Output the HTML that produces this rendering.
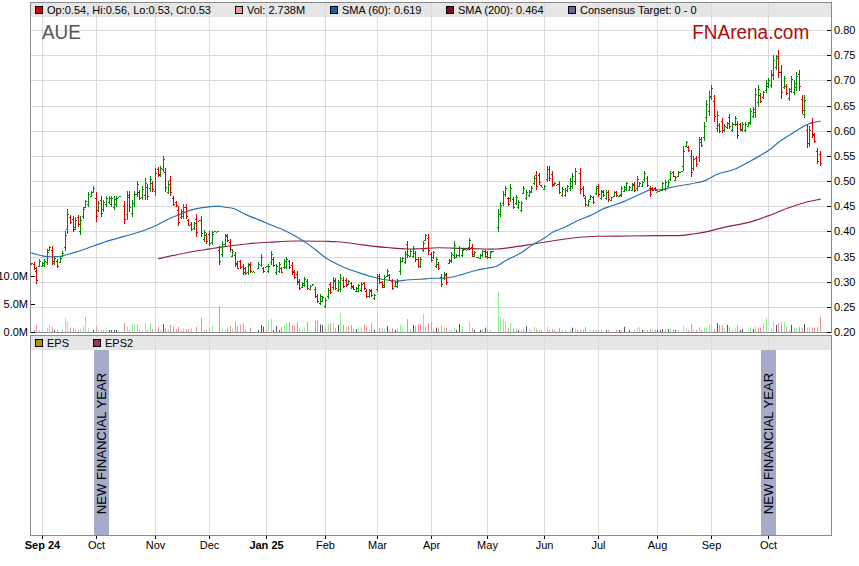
<!DOCTYPE html><html><head><meta charset="utf-8"><style>html,body{margin:0;padding:0;background:#fff;width:859px;height:566px;overflow:hidden}svg{display:block}text{font-family:"Liberation Sans",sans-serif}</style></head><body>
<svg width="859" height="566" viewBox="0 0 859 566">
<rect x="31" y="3" width="800" height="14" fill="#e6e6e6"/>
<path d="M31 30.5H831 M31 55.5H831 M31 80.5H831 M31 106.5H831 M31 131.5H831 M31 156.5H831 M31 181.5H831 M31 206.5H831 M31 231.5H831 M31 257.5H831 M31 282.5H831 M31 307.5H831 M42.5 3V332 M96.5 3V332 M155.5 3V332 M209.5 3V332 M266.5 3V332 M325.5 3V332 M377.5 3V332 M431.5 3V332 M487.5 3V332 M544.5 3V332 M598.5 3V332 M657.5 3V332 M711.5 3V332 M768.5 3V332" stroke="#dadada" stroke-width="1" fill="none" shape-rendering="crispEdges"/>
<rect x="35.5" y="6.5" width="7" height="7" fill="#dd0000" stroke="#000" stroke-width="1" shape-rendering="crispEdges"/>
<text x="47" y="14" font-size="11" fill="#000">Op:0.54, Hi:0.56, Lo:0.53, Cl:0.53</text>
<rect x="235.5" y="6.5" width="7" height="7" fill="#f49a9a" stroke="#000" stroke-width="1" shape-rendering="crispEdges"/>
<text x="247" y="14" font-size="11" fill="#000">Vol: 2.738M</text>
<rect x="330.5" y="6.5" width="7" height="7" fill="#1f5fa0" stroke="#000" stroke-width="1" shape-rendering="crispEdges"/>
<text x="342" y="14" font-size="11" fill="#000">SMA (60): 0.619</text>
<rect x="446.5" y="6.5" width="7" height="7" fill="#7a0c2a" stroke="#000" stroke-width="1" shape-rendering="crispEdges"/>
<text x="458" y="14" font-size="11" fill="#000">SMA (200): 0.464</text>
<rect x="568.5" y="6.5" width="7" height="7" fill="#6a6a9a" stroke="#000" stroke-width="1" shape-rendering="crispEdges"/>
<text x="580" y="14" font-size="11" fill="#000">Consensus Target: 0 - 0</text>
<text x="42" y="38.7" font-size="20.2" textLength="38.8" lengthAdjust="spacingAndGlyphs" fill="#555">AUE</text>
<text x="692.3" y="38.7" font-size="20" textLength="116.9" lengthAdjust="spacingAndGlyphs" fill="#b00a0a">FNArena.com</text>
<path d="M39.5 332V330.0 M47.5 332V327.7 M49.5 332V324.9 M62.5 332V329.1 M65.5 332V317.9 M67.5 332V322.1 M75.5 332V330.0 M80.5 332V329.1 M83.5 332V326.1 M85.5 332V316.1 M88.5 332V327.7 M98.5 332V330.0 M103.5 332V330.0 M106.5 332V330.0 M127.5 332V326.8 M132.5 332V324.0 M134.5 332V325.4 M137.5 332V324.0 M142.5 332V330.0 M145.5 332V323.1 M150.5 332V323.1 M155.5 332V326.1 M160.5 332V330.0 M168.5 332V329.1 M181.5 332V330.0 M183.5 332V328.4 M204.5 332V330.0 M212.5 332V326.1 M222.5 332V328.4 M225.5 332V330.0 M232.5 332V328.4 M268.5 332V320.7 M271.5 332V319.1 M284.5 332V325.4 M286.5 332V322.1 M299.5 332V328.4 M302.5 332V330.0 M304.5 332V327.7 M310.5 332V330.0 M325.5 332V326.8 M328.5 332V324.0 M333.5 332V323.1 M340.5 332V312.8 M346.5 332V326.8 M353.5 332V328.4 M358.5 332V328.4 M361.5 332V327.7 M369.5 332V330.0 M377.5 332V316.1 M384.5 332V329.1 M389.5 332V330.0 M397.5 332V328.4 M400.5 332V324.9 M402.5 332V326.8 M410.5 332V329.1 M423.5 332V313.7 M425.5 332V326.1 M433.5 332V329.1 M444.5 332V327.7 M449.5 332V330.0 M451.5 332V330.0 M454.5 332V327.7 M462.5 332V326.1 M469.5 332V322.1 M482.5 332V329.1 M490.5 332V330.0 M498.5 332V291.9 M500.5 332V317.0 M503.5 332V319.1 M505.5 332V320.7 M510.5 332V323.1 M516.5 332V328.4 M521.5 332V330.0 M523.5 332V329.1 M529.5 332V329.1 M531.5 332V330.0 M534.5 332V326.8 M547.5 332V326.8 M562.5 332V330.0 M565.5 332V330.0 M570.5 332V330.0 M575.5 332V329.1 M590.5 332V330.0 M596.5 332V330.0 M601.5 332V330.0 M621.5 332V330.0 M637.5 332V327.7 M639.5 332V326.8 M644.5 332V330.0 M652.5 332V330.0 M665.5 332V329.1 M670.5 332V327.7 M678.5 332V330.0 M683.5 332V326.1 M686.5 332V329.1 M693.5 332V329.1 M699.5 332V326.8 M704.5 332V327.7 M706.5 332V327.7 M709.5 332V324.0 M711.5 332V326.1 M724.5 332V327.7 M732.5 332V330.0 M735.5 332V328.4 M748.5 332V330.0 M750.5 332V327.7 M755.5 332V326.1 M763.5 332V323.1 M766.5 332V317.9 M771.5 332V328.4 M773.5 332V322.1 M784.5 332V322.1 M789.5 332V330.0 M794.5 332V327.7 M796.5 332V327.7 M807.5 332V327.7 M809.5 332V326.8" stroke="#8ef08e" stroke-width="1" fill="none"/>
<path d="M34.5 332V330.0 M36.5 332V324.9 M52.5 332V326.8 M57.5 332V330.0 M70.5 332V327.7 M73.5 332V327.7 M78.5 332V330.0 M96.5 332V326.8 M101.5 332V330.0 M124.5 332V323.1 M129.5 332V330.0 M139.5 332V330.0 M147.5 332V330.0 M152.5 332V329.1 M158.5 332V326.8 M165.5 332V327.7 M170.5 332V324.9 M173.5 332V326.8 M176.5 332V329.1 M178.5 332V326.8 M186.5 332V329.1 M188.5 332V329.1 M191.5 332V329.1 M196.5 332V326.8 M201.5 332V317.9 M206.5 332V330.0 M209.5 332V327.7 M219.5 332V305.8 M227.5 332V327.7 M230.5 332V326.1 M235.5 332V322.1 M237.5 332V326.1 M240.5 332V324.5 M243.5 332V323.1 M245.5 332V329.1 M250.5 332V327.7 M266.5 332V330.0 M281.5 332V326.8 M289.5 332V322.1 M292.5 332V324.9 M294.5 332V326.1 M297.5 332V322.1 M307.5 332V322.1 M315.5 332V320.7 M317.5 332V320.7 M330.5 332V323.1 M335.5 332V328.4 M343.5 332V324.9 M348.5 332V326.1 M351.5 332V324.9 M364.5 332V324.9 M366.5 332V326.8 M371.5 332V323.1 M379.5 332V327.7 M382.5 332V328.4 M392.5 332V327.7 M407.5 332V319.1 M415.5 332V326.1 M418.5 332V324.5 M420.5 332V323.8 M428.5 332V323.1 M431.5 332V322.1 M438.5 332V327.7 M441.5 332V326.1 M446.5 332V327.7 M472.5 332V327.7 M487.5 332V329.1 M508.5 332V327.7 M513.5 332V327.7 M536.5 332V329.1 M539.5 332V330.0 M541.5 332V330.0 M549.5 332V330.0 M552.5 332V329.1 M554.5 332V330.0 M559.5 332V327.7 M577.5 332V330.0 M580.5 332V330.0 M583.5 332V330.0 M585.5 332V326.8 M593.5 332V330.0 M598.5 332V330.0 M608.5 332V330.0 M616.5 332V330.0 M634.5 332V330.0 M647.5 332V330.0 M650.5 332V329.1 M655.5 332V330.0 M673.5 332V330.0 M688.5 332V330.0 M691.5 332V324.0 M696.5 332V330.0 M701.5 332V330.0 M714.5 332V329.1 M719.5 332V324.9 M722.5 332V324.9 M729.5 332V326.8 M737.5 332V324.9 M758.5 332V327.7 M760.5 332V327.7 M778.5 332V323.1 M781.5 332V322.1 M786.5 332V326.8 M799.5 332V326.8 M802.5 332V327.7 M812.5 332V327.7 M814.5 332V327.7 M817.5 332V326.8 M820.5 332V316.8" stroke="#f49090" stroke-width="1" fill="none"/>
<path d="M54.5 332V330.0 M93.5 332V330.0 M109.5 332V330.0 M111.5 332V330.0 M114.5 332V330.0 M116.5 332V330.0 M163.5 332V324.0 M258.5 332V330.0 M261.5 332V324.9 M263.5 332V326.8 M273.5 332V330.0 M276.5 332V326.1 M279.5 332V330.0 M320.5 332V324.5 M322.5 332V324.9 M338.5 332V324.9 M356.5 332V329.1 M374.5 332V330.0 M387.5 332V326.1 M395.5 332V330.0 M413.5 332V324.9 M436.5 332V327.7 M456.5 332V330.0 M459.5 332V324.0 M474.5 332V330.0 M480.5 332V330.0 M485.5 332V327.7 M518.5 332V330.0 M526.5 332V326.1 M572.5 332V327.7 M606.5 332V330.0 M619.5 332V330.0 M624.5 332V326.8 M629.5 332V330.0 M642.5 332V330.0 M657.5 332V330.0 M660.5 332V330.0 M662.5 332V329.1 M668.5 332V329.1 M675.5 332V330.0 M717.5 332V323.1 M727.5 332V324.9 M740.5 332V330.0 M742.5 332V329.1 M753.5 332V329.1 M776.5 332V324.9 M791.5 332V324.9 M804.5 332V324.0" stroke="#555555" stroke-width="1" fill="none"/>
<path d="M158.00,258.80C162.77,257.78 177.97,254.35 186.60,252.70C195.23,251.05 203.40,249.92 209.80,248.90C216.20,247.88 218.58,247.47 225.00,246.60C231.42,245.73 240.53,244.45 248.30,243.70C256.07,242.95 263.85,242.55 271.60,242.10C279.35,241.65 285.90,241.13 294.80,241.00C303.70,240.87 317.88,241.17 325.00,241.30C332.12,241.43 332.52,241.40 337.50,241.80C342.48,242.20 349.08,242.98 354.90,243.70C360.72,244.42 366.58,245.42 372.40,246.10C378.22,246.78 383.98,247.32 389.80,247.80C395.62,248.28 402.27,248.85 407.30,249.00C412.33,249.15 414.83,248.90 420.00,248.70C425.17,248.50 431.37,247.85 438.30,247.80C445.23,247.75 453.85,248.20 461.60,248.40C469.35,248.60 478.98,248.90 484.80,249.00C490.62,249.10 491.47,249.35 496.50,249.00C501.53,248.65 508.87,247.73 515.00,246.90C521.13,246.07 526.37,245.12 533.30,244.00C540.23,242.88 548.85,241.32 556.60,240.20C564.35,239.08 572.82,237.95 579.80,237.30C586.78,236.65 590.18,236.52 598.50,236.30C606.82,236.08 619.97,236.12 629.70,236.00C639.43,235.88 648.65,235.67 656.90,235.60C665.15,235.53 673.42,235.85 679.20,235.60C684.98,235.35 687.30,234.68 691.60,234.10C695.90,233.52 699.77,233.18 705.00,232.10C710.23,231.02 715.42,229.30 723.00,227.60C730.58,225.90 742.85,223.90 750.50,221.90C758.15,219.90 762.77,217.87 768.90,215.60C775.03,213.33 781.55,210.40 787.30,208.30C793.05,206.20 797.85,204.53 803.40,203.00C808.95,201.47 817.73,199.75 820.60,199.10" fill="none" stroke="#8e2048" stroke-width="1.15"/>
<path d="M31.20,252.90C33.52,253.48 41.42,255.77 45.10,256.40C48.78,257.03 50.58,256.73 53.30,256.70C56.02,256.67 58.50,256.73 61.40,256.20C64.30,255.67 67.20,254.53 70.70,253.50C74.20,252.47 78.52,251.30 82.40,250.00C86.28,248.70 89.15,247.38 94.00,245.70C98.85,244.02 105.50,241.72 111.50,239.90C117.50,238.08 124.98,236.23 130.00,234.80C135.02,233.37 137.33,232.80 141.60,231.30C145.87,229.80 151.13,227.87 155.60,225.80C160.07,223.73 164.52,220.73 168.40,218.90C172.28,217.07 175.22,216.27 178.90,214.80C182.58,213.33 186.62,211.30 190.50,210.10C194.38,208.90 197.73,208.27 202.20,207.60C206.67,206.93 213.50,206.17 217.30,206.10C221.10,206.03 222.17,206.77 225.00,207.20C227.83,207.63 230.80,207.47 234.30,208.70C237.80,209.93 240.77,212.27 246.00,214.60C251.23,216.93 258.92,219.90 265.70,222.70C272.48,225.50 281.45,228.97 286.70,231.40C291.95,233.83 293.90,235.35 297.20,237.30C300.50,239.25 303.40,240.98 306.50,243.10C309.60,245.22 312.72,247.63 315.80,250.00C318.88,252.37 322.75,255.63 325.00,257.30C327.25,258.97 326.25,258.38 329.30,260.00C332.35,261.62 338.07,264.77 343.30,267.00C348.53,269.23 355.47,271.65 360.70,273.40C365.93,275.15 370.62,276.43 374.70,277.50C378.78,278.57 381.52,279.22 385.20,279.80C388.88,280.38 392.92,281.00 396.80,281.00C400.68,281.00 404.63,280.10 408.50,279.80C412.37,279.50 416.00,279.45 420.00,279.20C424.00,278.95 427.90,278.53 432.50,278.30C437.10,278.07 442.75,278.42 447.60,277.80C452.45,277.18 456.95,275.82 461.60,274.60C466.25,273.38 471.23,271.57 475.50,270.50C479.77,269.43 483.70,268.92 487.20,268.20C490.70,267.48 493.40,267.47 496.50,266.20C499.60,264.93 502.72,262.30 505.80,260.60C508.88,258.90 512.37,257.37 515.00,256.00C517.63,254.63 518.55,254.37 521.60,252.40C524.65,250.43 529.42,246.63 533.30,244.20C537.18,241.77 541.60,239.83 544.90,237.80C548.20,235.77 549.60,233.83 553.10,232.00C556.60,230.17 561.83,228.68 565.90,226.80C569.97,224.92 573.23,222.65 577.50,220.70C581.77,218.75 587.62,216.90 591.50,215.10C595.38,213.30 597.72,211.35 600.80,209.90C603.88,208.45 606.20,207.78 610.00,206.40C613.80,205.02 618.25,203.78 623.60,201.60C628.95,199.42 637.57,195.30 642.10,193.30C646.63,191.30 647.50,190.22 650.80,189.60C654.10,188.98 657.98,190.08 661.90,189.60C665.82,189.12 669.35,187.68 674.30,186.70C679.25,185.72 686.48,184.72 691.60,183.70C696.72,182.68 700.53,182.25 705.00,180.60C709.47,178.95 713.48,175.68 718.40,173.80C723.32,171.92 729.15,171.43 734.50,169.30C739.85,167.17 744.77,164.18 750.50,161.00C756.23,157.82 763.92,153.53 768.90,150.20C773.88,146.87 775.80,144.25 780.40,141.00C785.00,137.75 791.90,133.50 796.50,130.70C801.10,127.90 803.98,125.82 808.00,124.20C812.02,122.58 818.50,121.53 820.60,121.00" fill="none" stroke="#2272b4" stroke-width="1.15"/>
<path d="M31.5 262.5V265.0M30 264.5H31M32 263.5H33 M39.5 259.2V267.3M38 266.5H39M40 261.5H41 M42.5 261.5V267.3M41 266.5H42M43 263.5H44 M44.5 259.0V266.8M43 265.5H44M45 261.5H46 M47.5 248.8V264.7M46 262.5H47M48 252.5H49 M49.5 246.0V251.4M48 250.5H49M50 247.5H51 M54.5 256.7V264.7M53 263.5H54M55 258.5H56 M60.5 257.3V262.6M59 262.5H60M61 258.5H62 M62.5 251.4V257.3M61 256.5H62M63 253.5H64 M65.5 231.0V251.4M64 247.5H65M66 235.5H67 M67.5 209.0V234.0M66 229.5H67M68 214.5H69 M75.5 217.0V229.7M74 227.5H75M76 220.5H77 M80.5 216.0V234.8M79 231.5H80M81 220.5H82 M83.5 206.5V218.9M82 216.5H83M84 209.5H85 M85.5 199.5V208.3M84 207.5H85M86 201.5H87 M88.5 191.5V206.5M87 204.5H88M89 194.5H90 M91.5 190.6V196.8M90 196.5H91M92 192.5H93 M93.5 186.2V193.3M92 192.5H93M94 188.5H95 M98.5 201.2V211.8M97 210.5H98M99 203.5H100 M103.5 199.5V211.8M102 209.5H103M104 202.5H105 M106.5 196.3V206.5M105 204.5H106M107 198.5H108 M109.5 196.3V203.9M108 202.5H109M110 198.5H111 M111.5 196.3V206.5M110 204.5H111M112 198.5H113 M114.5 196.3V209.7M113 207.5H114M115 199.5H116 M116.5 196.3V206.5M115 204.5H116M117 198.5H118 M119.5 196.2V197.2M118 197.5H119M120 196.5H121 M127.5 191.0V219.8M126 214.5H127M128 197.5H129 M132.5 199.5V216.8M131 213.5H132M133 203.5H134 M134.5 191.0V206.5M133 203.5H134M135 194.5H136 M137.5 181.0V196.8M136 194.5H137M138 184.5H139 M142.5 186.2V199.5M141 197.5H142M143 189.5H144 M145.5 178.3V199.5M144 195.5H145M146 183.5H147 M150.5 176.1V191.5M149 188.5H150M151 179.5H152 M155.5 167.7V196.3M154 191.5H155M156 173.5H157 M160.5 165.9V176.5M159 174.5H160M161 168.5H162 M163.5 156.2V171.7M162 169.5H163M164 159.5H165 M168.5 181.0V194.2M167 192.5H168M169 184.5H170 M181.5 209.2V218.9M180 217.5H181M182 211.5H183 M183.5 204.4V218.9M182 216.5H183M184 207.5H185 M194.5 221.6V229.5M193 228.5H194M195 223.5H196 M199.5 220.2V221.2M198 221.5H199M200 220.5H201 M204.5 229.5V241.9M203 239.5H204M205 232.5H206 M212.5 231.3V244.5M211 242.5H212M213 234.5H214 M214.5 230.8V231.8M213 232.5H214M215 231.5H216 M217.5 230.8V231.8M216 232.5H217M218 231.5H219 M222.5 240.9V257.3M221 254.5H222M223 244.5H224 M225.5 233.9V246.2M224 244.5H225M226 236.5H227 M232.5 248.9V257.3M231 256.5H232M233 251.5H234 M248.5 263.0V274.5M247 272.5H248M249 265.5H250 M253.5 271.3V272.3M252 272.5H253M254 272.5H255 M258.5 262.1V269.2M257 268.5H258M259 264.5H260 M261.5 254.2V267.4M260 265.5H261M262 257.5H263 M266.5 266.3V267.3M265 267.5H266M267 266.5H268 M268.5 263.9V272.7M267 271.5H268M269 266.5H270 M271.5 251.0V264.8M270 262.5H271M272 254.5H273 M276.5 263.9V274.5M275 272.5H276M277 266.5H278 M279.5 262.1V272.7M278 271.5H279M280 264.5H281 M284.5 258.6V269.2M283 267.5H284M285 261.5H286 M286.5 256.8V269.2M285 267.5H286M287 259.5H288 M302.5 281.8V288.0M301 287.5H302M303 283.5H304 M304.5 277.4V287.1M303 285.5H304M305 279.5H306 M310.5 284.5V289.8M309 289.5H310M311 286.5H312 M312.5 284.0V286.0M311 286.5H312M313 284.5H314 M320.5 294.2V304.8M319 303.5H320M321 296.5H322 M322.5 296.0V302.2M321 301.5H322M323 297.5H324 M325.5 297.7V307.5M324 306.5H325M326 300.5H327 M328.5 288.0V298.6M327 296.5H328M329 290.5H330 M333.5 277.4V289.8M332 287.5H333M334 280.5H335 M338.5 280.0V292.4M337 290.5H338M339 282.5H340 M340.5 274.4V292.4M339 289.5H340M341 278.5H342 M348.5 280.0V284.5M347 284.5H348M349 281.5H350 M356.5 287.1V291.6M355 291.5H356M357 288.5H358 M358.5 283.6V292.4M357 291.5H358M359 285.5H360 M361.5 281.8V292.4M360 290.5H361M362 284.5H363 M369.5 288.9V297.7M368 296.5H369M370 291.5H371 M374.5 294.2V299.5M373 298.5H374M375 295.5H376 M377.5 273.9V292.4M376 289.5H377M378 278.5H379 M384.5 274.8V288.0M383 285.5H384M385 277.5H386 M387.5 269.1V277.4M386 276.5H387M388 271.5H389 M395.5 281.0V287.1M394 286.5H395M396 282.5H397 M397.5 279.2V288.0M396 286.5H397M398 281.5H399 M400.5 257.1V274.8M399 271.5H400M401 261.5H402 M402.5 257.1V262.4M401 261.5H402M403 258.5H404 M405.5 250.9V264.2M404 262.5H405M406 254.5H407 M410.5 249.2V257.1M409 256.5H410M411 251.5H412 M413.5 246.1V258.0M412 256.5H413M414 248.5H415 M420.5 257.1V267.7M419 266.5H420M421 259.5H422 M423.5 240.8V251.8M422 250.5H423M424 243.5H425 M425.5 233.8V241.2M424 240.5H425M426 235.5H427 M433.5 250.9V258.9M432 257.5H433M434 252.5H435 M436.5 257.1V267.7M435 266.5H436M437 259.5H438 M444.5 272.0V280.0M443 278.5H444M445 274.5H446 M449.5 259.0V264.3M448 263.5H449M450 260.5H451 M451.5 251.6V263.3M450 261.5H451M452 254.5H453 M454.5 241.0V259.0M453 255.5H454M455 245.5H456 M456.5 253.7V258.0M455 257.5H456M457 255.5H458 M459.5 246.3V256.9M458 255.5H459M460 248.5H461 M462.5 248.4V256.9M461 255.5H462M463 250.5H464 M464.5 248.5V249.5M463 249.5H464M465 249.5H466 M467.5 248.4V250.0M466 250.5H467M468 249.5H469 M469.5 237.8V249.5M468 247.5H469M470 240.5H471 M474.5 251.3V257.1M473 256.5H474M475 252.5H476 M477.5 256.6V257.6M476 257.5H477M478 257.5H479 M480.5 253.7V259.0M479 258.5H480M481 255.5H482 M482.5 249.5V256.9M481 255.5H482M483 251.5H484 M490.5 250.6V259.0M489 257.5H490M491 252.5H492 M492.5 250.5V251.5M491 251.5H492M493 251.5H494 M498.5 209.2V231.5M497 227.5H498M499 214.5H500 M500.5 201.8V216.6M499 214.5H500M501 205.5H502 M503.5 191.2V206.0M502 203.5H503M504 194.5H505 M505.5 185.9V196.5M504 194.5H505M506 188.5H507 M510.5 184.4V201.7M509 198.5H510M511 188.5H512 M516.5 194.6V205.0M515 203.5H516M517 197.5H518 M518.5 200.0V209.2M517 207.5H518M519 202.5H520 M521.5 201.2V211.8M520 210.5H521M522 203.5H523 M523.5 186.2V194.2M522 193.5H523M524 188.5H525 M526.5 189.8V199.5M525 198.5H526M527 192.5H528 M529.5 189.8V196.8M528 195.5H529M530 191.5H531 M531.5 186.2V193.3M530 192.5H531M532 188.5H533 M534.5 176.1V184.5M533 183.5H534M535 178.5H536 M544.5 184.5V189.8M543 189.5H544M545 186.5H546 M547.5 166.3V181.8M546 179.5H547M548 169.5H549 M554.5 181.8V186.2M553 185.5H554M555 183.5H556 M557.5 184.0V185.0M556 185.5H557M558 184.5H559 M562.5 187.1V196.8M561 195.5H562M563 189.5H564 M565.5 188.0V196.8M564 195.5H565M566 190.5H567 M567.5 184.5V191.5M566 190.5H567M568 186.5H569 M570.5 178.3V190.6M569 188.5H570M571 181.5H572 M572.5 173.0V188.9M571 186.5H572M573 176.5H574 M575.5 167.7V184.5M574 181.5H575M576 171.5H577 M588.5 199.5V206.5M587 205.5H588M589 201.5H590 M590.5 194.5V200.0M589 199.5H590M591 196.5H592 M596.5 186.0V194.8M595 193.5H596M597 188.5H598 M601.5 189.5V200.0M600 198.5H601M602 192.5H603 M606.5 189.5V200.0M605 198.5H606M607 192.5H608 M611.5 196.5V201.0M610 200.5H611M612 197.5H613 M614.5 191.2V197.4M613 196.5H614M615 192.5H616 M619.5 194.8V196.5M618 196.5H619M620 195.5H621 M621.5 186.3V196.5M620 194.5H621M622 188.5H623 M624.5 186.3V192.1M623 191.5H624M625 187.5H626 M626.5 181.5V191.2M625 189.5H626M627 183.5H628 M629.5 186.0V191.2M628 190.5H629M630 187.5H631 M632.5 183.3V191.2M631 190.5H632M633 185.5H634 M637.5 176.2V191.2M636 188.5H637M638 179.5H639 M639.5 181.5V186.8M638 186.5H639M640 183.5H641 M642.5 180.6V186.8M641 186.5H642M643 182.5H644 M644.5 171.4V181.5M643 179.5H644M645 173.5H646 M657.5 190.7V191.7M656 192.5H657M658 191.5H659 M660.5 189.5V191.2M659 191.5H660M661 190.5H662 M662.5 181.5V191.2M661 189.5H662M663 183.5H664 M665.5 180.2V190.6M664 189.5H665M666 182.5H667 M668.5 180.2V187.1M667 186.5H668M669 182.5H670 M670.5 171.0V181.4M669 179.5H670M671 173.5H672 M675.5 175.7V181.4M674 180.5H675M676 177.5H677 M678.5 171.0V176.8M677 176.5H678M679 172.5H680 M681.5 170.8V171.8M680 172.5H681M682 171.5H683 M683.5 145.8V171.0M682 166.5H683M684 151.5H685 M686.5 141.2V147.0M685 146.5H686M687 142.5H688 M693.5 156.1V171.0M692 168.5H693M694 159.5H695 M699.5 137.0V161.9M698 157.5H699M700 142.5H701 M704.5 121.7V141.2M703 137.5H704M705 126.5H706 M706.5 99.9V121.7M705 117.5H706M707 104.5H708 M709.5 90.7V115.9M708 111.5H709M710 96.5H711 M711.5 84.9V99.9M710 97.5H711M712 88.5H713 M717.5 111.3V132.0M716 128.5H717M718 115.5H719 M724.5 124.0V132.0M723 130.5H724M725 126.5H726 M727.5 121.7V128.6M726 127.5H727M728 123.5H729 M732.5 121.7V132.0M731 130.5H732M733 124.5H734 M735.5 116.0V126.3M734 124.5H735M736 118.5H737 M742.5 121.7V131.9M741 130.5H742M743 124.5H744 M745.5 121.5V131.9M744 130.5H745M746 124.5H747 M748.5 121.5V127.3M747 126.5H748M749 123.5H750 M750.5 107.8V125.0M749 122.5H750M751 111.5H752 M753.5 106.6V118.1M752 116.5H753M754 109.5H755 M755.5 88.2V118.1M754 112.5H755M756 94.5H757 M758.5 84.8V106.6M757 102.5H758M759 89.5H760 M763.5 90.5V98.6M762 97.5H763M764 92.5H765 M766.5 80.2V92.8M765 90.5H766M767 83.5H768 M768.5 78.0V88.0M767 86.5H768M769 80.5H770 M771.5 69.9V88.2M770 85.5H771M772 74.5H773 M773.5 54.9V80.2M772 75.5H773M774 60.5H775 M776.5 54.9V69.9M775 67.5H776M777 58.5H778 M784.5 75.6V89.4M783 87.5H784M785 78.5H786 M789.5 88.2V100.9M788 98.5H789M790 91.5H791 M791.5 75.6V92.8M790 89.5H791M792 79.5H793 M794.5 80.2V95.1M793 92.5H794M795 83.5H796 M796.5 72.2V90.5M795 87.5H796M797 76.5H798 M804.5 95.1V118.1M803 114.5H804M805 100.5H806 M809.5 126.1V146.8M808 143.5H809M810 130.5H811" stroke="#008a00" stroke-width="1" fill="none" shape-rendering="crispEdges"/>
<path d="M34.5 262.0V269.5M33 264.5H34M35 268.5H36 M36.5 267.3V283.8M35 271.5H36M37 280.5H38 M52.5 246.0V264.7M51 250.5H52M53 261.5H54 M57.5 258.9V267.9M56 261.5H57M58 266.5H59 M70.5 214.8V224.0M69 217.5H70M71 222.5H72 M73.5 216.0V232.0M72 219.5H73M74 229.5H75 M78.5 214.5V226.9M77 217.5H78M79 224.5H80 M96.5 191.5V221.6M95 198.5H96M97 216.5H98 M101.5 196.3V216.8M100 200.5H101M102 213.5H103 M124.5 201.2V223.9M123 206.5H124M125 219.5H126 M129.5 191.0V211.6M128 195.5H129M130 207.5H131 M139.5 189.8V199.5M138 192.5H139M140 198.5H141 M147.5 183.6V199.5M146 187.5H147M148 196.5H149 M152.5 181.0V191.5M151 183.5H152M153 189.5H154 M158.5 166.8V176.5M157 169.5H158M159 175.5H160 M165.5 167.7V191.5M164 172.5H165M166 187.5H167 M170.5 176.1V196.3M169 180.5H170M171 192.5H172 M173.5 196.3V206.2M172 198.5H173M174 204.5H175 M176.5 201.2V206.5M175 202.5H176M177 205.5H178 M178.5 206.2V226.3M177 210.5H178M179 222.5H180 M186.5 204.4V218.9M185 207.5H186M187 216.5H188 M188.5 218.9V226.3M187 220.5H188M189 225.5H190 M191.5 221.6V231.3M190 224.5H191M192 229.5H193 M196.5 214.0V236.6M195 219.5H196M197 232.5H198 M201.5 216.3V236.6M200 220.5H201M202 233.5H203 M206.5 233.0V243.6M205 235.5H206M207 241.5H208 M209.5 231.3V246.3M208 234.5H209M210 243.5H211 M219.5 246.2V264.8M218 250.5H219M220 261.5H221 M227.5 233.9V241.8M226 235.5H227M228 240.5H229 M230.5 239.2V251.5M229 242.5H230M231 249.5H232 M235.5 251.5V267.4M234 255.5H235M236 264.5H237 M237.5 261.2V269.2M236 263.5H237M238 268.5H239 M240.5 259.5V269.2M239 261.5H240M241 267.5H242 M243.5 263.9V274.5M242 266.5H243M244 272.5H245 M245.5 266.5V274.5M244 268.5H245M246 273.5H247 M250.5 262.1V272.7M249 264.5H250M251 271.5H252 M263.5 266.5V272.7M262 268.5H263M264 271.5H265 M273.5 256.8V267.4M272 259.5H273M274 265.5H275 M281.5 267.4V272.7M280 268.5H281M282 272.5H283 M289.5 259.5V269.2M288 261.5H289M290 267.5H291 M292.5 262.4V274.8M291 265.5H292M293 272.5H294 M294.5 269.5V279.2M293 271.5H294M295 277.5H296 M297.5 271.2V284.5M296 274.5H297M298 282.5H299 M299.5 279.2V289.8M298 281.5H299M300 288.5H301 M307.5 279.2V289.8M306 281.5H307M308 288.5H309 M315.5 287.1V297.7M314 289.5H315M316 296.5H317 M317.5 294.2V303.0M316 296.5H317M318 301.5H319 M330.5 281.8V294.2M329 284.5H330M331 292.5H332 M335.5 278.3V289.8M334 281.5H335M336 288.5H337 M343.5 277.4V288.0M342 280.5H343M344 286.5H345 M346.5 278.3V287.1M345 280.5H346M347 285.5H348 M351.5 281.8V288.9M350 283.5H351M352 287.5H353 M353.5 285.4V289.8M352 286.5H353M354 289.5H355 M364.5 281.8V289.8M363 283.5H364M365 288.5H366 M366.5 288.9V297.7M365 291.5H366M367 296.5H368 M371.5 288.9V296.9M370 290.5H371M372 295.5H373 M379.5 273.9V283.6M378 276.5H379M380 282.5H381 M382.5 281.0V288.0M381 282.5H382M383 287.5H384 M389.5 273.9V281.0M388 275.5H389M390 280.5H391 M392.5 279.2V289.8M391 281.5H392M393 288.5H394 M407.5 240.8V258.0M406 244.5H407M408 255.5H409 M415.5 250.9V261.5M414 253.5H415M416 259.5H417 M418.5 257.1V267.7M417 259.5H418M419 266.5H420 M428.5 233.8V254.5M427 238.5H428M429 250.5H430 M431.5 251.8V261.5M430 254.5H431M432 260.5H433 M438.5 262.4V269.5M437 264.5H438M439 268.5H440 M441.5 274.0V287.0M440 277.5H441M442 284.5H443 M446.5 272.8V284.5M445 275.5H446M447 282.5H448 M472.5 244.2V256.9M471 247.5H472M473 254.5H474 M485.5 249.5V258.0M484 251.5H485M486 256.5H487 M487.5 250.6V259.0M486 252.5H487M488 257.5H489 M508.5 196.5V206.0M507 198.5H508M509 204.5H510 M513.5 196.5V209.2M512 199.5H513M514 207.5H515 M536.5 171.2V189.8M535 175.5H536M537 186.5H538 M539.5 173.0V184.5M538 175.5H539M540 182.5H541 M541.5 184.5V187.1M540 185.5H541M542 187.5H543 M549.5 166.3V180.9M548 169.5H549M550 178.5H551 M552.5 171.2V187.1M551 174.5H552M553 184.5H554 M559.5 181.4V194.2M558 184.5H559M560 192.5H561 M580.5 167.9V194.4M579 173.5H580M581 189.5H582 M583.5 186.2V196.8M582 188.5H583M584 195.5H585 M585.5 196.0V206.5M584 198.5H585M586 204.5H587 M593.5 195.5V203.8M592 197.5H593M594 202.5H595 M598.5 183.8V196.5M597 186.5H598M599 194.5H600 M603.5 189.5V196.5M602 191.5H603M604 195.5H605 M608.5 189.5V201.8M607 192.5H608M609 199.5H610 M616.5 191.2V196.5M615 192.5H616M617 195.5H618 M634.5 181.5V192.1M633 184.5H634M635 190.5H636 M647.5 176.2V186.8M646 178.5H647M648 185.5H649 M650.5 186.0V196.5M649 188.5H650M651 194.5H652 M652.5 186.8V191.2M651 188.5H652M653 190.5H654 M655.5 186.8V191.2M654 188.5H655M656 190.5H657 M673.5 171.0V176.8M672 172.5H673M674 176.5H675 M688.5 145.8V151.5M687 147.5H688M689 150.5H690 M691.5 150.4V176.8M690 156.5H691M692 172.5H693 M696.5 156.1V166.5M695 158.5H696M697 164.5H698 M701.5 136.6V147.0M700 139.5H701M702 145.5H703 M714.5 95.3V121.7M713 101.5H714M715 116.5H716 M719.5 122.8V133.2M718 125.5H719M720 131.5H721 M722.5 118.2V133.2M721 121.5H722M723 130.5H724 M729.5 113.6V128.6M728 117.5H729M730 126.5H731 M737.5 120.5V138.9M736 124.5H737M738 135.5H739 M740.5 122.8V130.9M739 124.5H740M741 129.5H742 M760.5 92.8V103.2M759 95.5H760M761 101.5H762 M778.5 50.3V77.9M777 56.5H778M779 72.5H780 M781.5 65.3V98.6M780 72.5H781M782 92.5H783 M786.5 83.6V95.1M785 86.5H786M787 93.5H788 M799.5 69.9V90.5M798 74.5H799M800 86.5H801 M802.5 95.1V113.5M801 99.5H802M803 110.5H804 M807.5 125.0V148.0M806 130.5H807M808 143.5H809 M812.5 118.1V137.6M811 122.5H812M813 134.5H814 M814.5 133.0V143.4M813 135.5H814M815 141.5H816 M817.5 148.0V164.0M816 151.5H817M818 161.5H819 M820.5 151.4V166.3M819 154.5H820M821 163.5H822" stroke="#dd0000" stroke-width="1" fill="none" shape-rendering="crispEdges"/>
<rect x="30.5" y="2.5" width="801" height="330" fill="none" stroke="#8a8a8a" stroke-width="1" shape-rendering="crispEdges"/>
<text x="834" y="34" font-size="11" fill="#000">0.80</text>
<text x="834" y="59" font-size="11" fill="#000">0.75</text>
<text x="834" y="84" font-size="11" fill="#000">0.70</text>
<text x="834" y="110" font-size="11" fill="#000">0.65</text>
<text x="834" y="135" font-size="11" fill="#000">0.60</text>
<text x="834" y="160" font-size="11" fill="#000">0.55</text>
<text x="834" y="185" font-size="11" fill="#000">0.50</text>
<text x="834" y="210" font-size="11" fill="#000">0.45</text>
<text x="834" y="235" font-size="11" fill="#000">0.40</text>
<text x="834" y="261" font-size="11" fill="#000">0.35</text>
<text x="834" y="286" font-size="11" fill="#000">0.30</text>
<text x="834" y="311" font-size="11" fill="#000">0.25</text>
<text x="834" y="336" font-size="11" fill="#000">0.20</text>
<path d="M827 30.5H831 M827 55.5H831 M827 80.5H831 M827 106.5H831 M827 131.5H831 M827 156.5H831 M827 181.5H831 M827 206.5H831 M827 231.5H831 M827 257.5H831 M827 282.5H831 M827 307.5H831 M827 332.5H831 M31 276.5H35 M31 304.5H35 M31 332.5H35" stroke="#000" stroke-width="1" fill="none" shape-rendering="crispEdges"/>
<text x="28" y="280" font-size="11" fill="#000" text-anchor="end">10.0M</text>
<text x="28" y="308" font-size="11" fill="#000" text-anchor="end">5.0M</text>
<text x="28" y="336" font-size="11" fill="#000" text-anchor="end">0.0M</text>
<rect x="31" y="336" width="800" height="14" fill="#e6e6e6"/>
<path d="M42.5 336V535 M96.5 336V535 M155.5 336V535 M209.5 336V535 M266.5 336V535 M325.5 336V535 M377.5 336V535 M431.5 336V535 M487.5 336V535 M544.5 336V535 M598.5 336V535 M657.5 336V535 M711.5 336V535 M768.5 336V535" stroke="#dadada" stroke-width="1" fill="none" shape-rendering="crispEdges"/>
<rect x="94" y="350" width="15" height="185" fill="#a4acca"/>
<rect x="761" y="350" width="15" height="185" fill="#a4acca"/>
<text transform="translate(106.2,514.2) rotate(-90)" font-size="13.6" textLength="141.3" lengthAdjust="spacingAndGlyphs" fill="#000">NEW FINANCIAL YEAR</text>
<text transform="translate(773.2,514.2) rotate(-90)" font-size="13.6" textLength="141.3" lengthAdjust="spacingAndGlyphs" fill="#000">NEW FINANCIAL YEAR</text>
<rect x="35.5" y="339.5" width="7" height="7" fill="#b8900a" stroke="#000" stroke-width="1" shape-rendering="crispEdges"/>
<text x="47" y="347" font-size="11" fill="#000">EPS</text>
<rect x="93.5" y="339.5" width="7" height="7" fill="#993366" stroke="#000" stroke-width="1" shape-rendering="crispEdges"/>
<text x="105" y="347" font-size="11" fill="#000">EPS2</text>
<rect x="30.5" y="335.5" width="801" height="200" fill="none" stroke="#8a8a8a" stroke-width="1" shape-rendering="crispEdges"/>
<path d="M42.5 536V539 M96.5 536V539 M155.5 536V539 M209.5 536V539 M266.5 536V539 M325.5 536V539 M377.5 536V539 M431.5 536V539 M487.5 536V539 M544.5 536V539 M598.5 536V539 M657.5 536V539 M711.5 536V539 M768.5 536V539" stroke="#000" stroke-width="1" fill="none" shape-rendering="crispEdges"/>
<text x="42.5" y="549" font-size="11" font-weight="bold" fill="#000" text-anchor="middle">Sep 24</text>
<text x="96.5" y="549" font-size="11" fill="#000" text-anchor="middle">Oct</text>
<text x="155.5" y="549" font-size="11" fill="#000" text-anchor="middle">Nov</text>
<text x="209.5" y="549" font-size="11" fill="#000" text-anchor="middle">Dec</text>
<text x="266.5" y="549" font-size="11" font-weight="bold" fill="#000" text-anchor="middle">Jan 25</text>
<text x="325.5" y="549" font-size="11" fill="#000" text-anchor="middle">Feb</text>
<text x="377.5" y="549" font-size="11" fill="#000" text-anchor="middle">Mar</text>
<text x="431.5" y="549" font-size="11" fill="#000" text-anchor="middle">Apr</text>
<text x="487.5" y="549" font-size="11" fill="#000" text-anchor="middle">May</text>
<text x="544.5" y="549" font-size="11" fill="#000" text-anchor="middle">Jun</text>
<text x="598.5" y="549" font-size="11" fill="#000" text-anchor="middle">Jul</text>
<text x="657.5" y="549" font-size="11" fill="#000" text-anchor="middle">Aug</text>
<text x="711.5" y="549" font-size="11" fill="#000" text-anchor="middle">Sep</text>
<text x="768.5" y="549" font-size="11" fill="#000" text-anchor="middle">Oct</text>
</svg></body></html>
